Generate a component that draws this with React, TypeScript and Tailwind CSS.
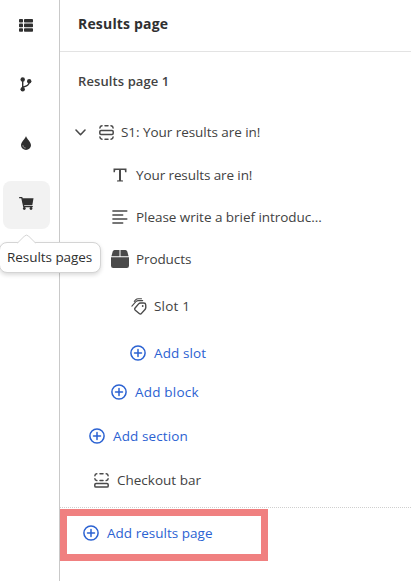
import type { ReactNode } from "react";

const ink = "#4a4a4a";

function ListIcon() {
  return (
    <svg width="14" height="13" viewBox="0 0 14 13" fill="#303030">
      <rect x="0" y="0" width="4" height="3.6" rx=".8" />
      <rect x="5" y="0" width="9" height="3.6" rx=".8" />
      <rect x="0" y="4.6" width="4" height="3.6" rx=".8" />
      <rect x="5" y="4.6" width="9" height="3.6" rx=".8" />
      <rect x="0" y="9.2" width="4" height="3.6" rx=".8" />
      <rect x="5" y="9.2" width="9" height="3.6" rx=".8" />
    </svg>
  );
}

function BranchIcon() {
  return (
    <svg width="12" height="15" viewBox="0 0 12 15" fill="#303030">
      <circle cx="2.7" cy="2.5" r="2.2" />
      <circle cx="2.7" cy="12.3" r="2.2" />
      <circle cx="9.2" cy="4.3" r="2.2" />
      <path d="M2.7 2.5v9.8M9.2 4.5c0 3.7-2.2 4.4-6.2 5.7" fill="none" stroke="#303030" strokeWidth="1.4" />
    </svg>
  );
}

function DropIcon() {
  return (
    <svg width="10" height="14" viewBox="0 0 10 14">
      <path d="M5 0C4.5 2.6 0 6 0 9.2a5 4.8 0 0 0 10 0C10 6 5.500 2.600 5 0z" fill="#303030" />
      <path d="M1.900 9.200c.1 1.800 1 2.600 2.700 2.800" fill="none" stroke="#aaa" strokeWidth=".9" />
    </svg>
  );
}

function CartIcon() {
  return (
    <svg width="15" height="13" viewBox="0 0 15 13" fill="#303030">
      <path d="M.6.7h2.200l2 8.900h8.500" fill="none" stroke="#303030" strokeWidth="1.300" strokeLinecap="round" />
      <path d="M3 1.300h11.500l-1.200 7H4.400z" />
      <circle cx="5.300" cy="11.500" r="1.400" />
      <circle cx="12" cy="11.500" r="1.400" />
    </svg>
  );
}

function Chevron() {
  return (
    <svg width="11" height="7" viewBox="0 0 11 7" fill="none" stroke={ink} strokeWidth="1.6" strokeLinecap="round" strokeLinejoin="round">
      <path d="m1 1 4.500 4.700L10 1" />
    </svg>
  );
}

function SectionIcon() {
  return (
    <svg width="15" height="15" viewBox="0 0 15 15" fill="none" stroke={ink} strokeWidth="1.500" strokeLinecap="round">
      <rect x=".8" y="5.500" width="13.400" height="4" rx="1.200" />
      <path d="M.9 3Q1 1 3 .8M6 .8h3M12 .8q2 .2 2.100 2.200M.9 12q.1 2 2.100 2.200M6 14.200h3M12 14.200q2-.2 2.100-2.200" />
    </svg>
  );
}

function TextIcon() {
  return (
    <svg width="14" height="14" viewBox="0 0 14 14" fill={ink}>
      <path d="M.5.500h13v3.800h-1.400L11.700 2H8v10.200l2 .3v1H4v-1l2-.3V2H2.300l-.4 2.300H.5z" />
    </svg>
  );
}

function LinesIcon() {
  return (
    <svg width="16" height="14" viewBox="0 0 16 14" stroke={ink} strokeWidth="1.500" strokeLinecap="round">
      <path d="M.9 1h13.900M.9 5h9.800M.9 9h13.900M.9 13h9.800" />
    </svg>
  );
}

function BoxIcon() {
  return (
    <svg width="18" height="18" viewBox="0 0 18 18" fill={ink}>
      <path d="M3.500 0h5v6.300H.4L1.700 1.600Q2.200 0 3.500 0zM9.500 0h5q1.300 0 1.800 1.600l1.300 4.700H9.500zM0 7.300h18v8.500q0 2.200-2.200 2.200H2.200Q0 18 0 15.800z" />
    </svg>
  );
}

function TagIcon() {
  return (
    <svg width="16" height="17" viewBox="0 0 16 17" fill="none" stroke={ink} strokeWidth="1.400" strokeLinecap="round" strokeLinejoin="round">
      <path d="M9.600 5h3.200q1.800 0 1.900 1.800l.1 2.800q0 .9-.6 1.600l-3.700 4.200q-1.100 1.100-2.300.1L4.300 12.300q-1.100-1.100-.2-2.300l3.500-4.100q.8-.9 2-.9z" />
      <path d="M.9 8.200 4.900 3.700Q6 2.600 7.400 2.600h4.300" strokeWidth="1.100" />
      <path d="M3.300 3.300 4.600 1.900Q5.700.7 7.200.7h3.300" strokeWidth="1.100" />
      <circle cx="11.700" cy="8" r=".9" fill={ink} stroke="none" />
    </svg>
  );
}

function CheckoutIcon() {
  return (
    <svg width="15" height="15" viewBox="0 0 15 15" fill="none" stroke={ink} strokeWidth="1.500" strokeLinecap="round">
      <rect x=".8" y="10.600" width="13.400" height="3.500" rx="1.200" />
      <path d="M.9 2.700Q1 1 2.800.8M6 .8h3M12.200.8q1.800.2 1.900 1.900M.9 5.800Q1 7.400 2.800 7.600M6 7.600h3M12.200 7.600q1.800-.2 1.900-1.800" />
    </svg>
  );
}

function PlusIcon() {
  return (
    <svg width="16" height="16" viewBox="0 0 16 16" fill="none" stroke="#2b62d2" strokeWidth="1.500" strokeLinecap="round">
      <circle cx="8" cy="8" r="7.100" />
      <path d="M8 4.500v7M4.500 8h7" />
    </svg>
  );
}

function Row({ className, icon, children }: { className: string; icon: ReactNode; children: ReactNode }) {
  return (
    <div className={`flex shrink-0 items-center whitespace-nowrap ${className}`}>
      {icon}
      {children}
    </div>
  );
}

export default function App() {
  return (
    <div className="relative flex h-[581px] w-[411px] overflow-hidden bg-white font-['Open_Sans','Noto_Sans',sans-serif] text-[13.5px] leading-5 text-[#424242]">
      <nav className="flex w-[60px] shrink-0 flex-col border-r border-[#c9c9c9] pl-[3px]">
        <div className="flex h-[50px] w-[46px] items-center justify-center"><ListIcon /></div>
        <div className="mt-[10px] flex h-12 w-[46px] items-center justify-center"><BranchIcon /></div>
        <div className="mt-[11px] flex h-12 w-[46px] items-center justify-center"><DropIcon /></div>
        <div className="mt-[14px] flex h-12 w-[47px] items-center justify-center rounded-lg bg-[#f2f2f2] pb-1"><CartIcon /></div>
      </nav>
      <main className="flex min-w-0 flex-1 flex-col">
        <header className="h-[52px] shrink-0 border-b border-[#e3e3e3] pl-[18px] pt-[14px] text-[14px] font-bold text-[#303030]">
          <span className="tracking-[0.18px]">Results page</span>
        </header>
        <h2 className="h-[59px] shrink-0 pl-[18px] pt-[19px] text-[13px] font-semibold tracking-[0.1px] text-[#424242]">Results page 1</h2>
        <Row className="h-[42px] pl-[15px]" icon={<><Chevron /><span className="w-[13px]" /><SectionIcon /></>}><span className="ml-[7px] tracking-[-0.05px]">S1: Your results are in!</span></Row>
        <Row className="h-[44px] pl-[53px]" icon={<TextIcon />}><span className="ml-[9px] tracking-[-0.1px]">Your results are in!</span></Row>
        <Row className="h-[40px] pl-[52px]" icon={<LinesIcon />}><span className="ml-[8px] tracking-[-0.04px]">Please write a brief introduc...</span></Row>
        <Row className="h-[44px] pl-[51px]" icon={<BoxIcon />}><span className="ml-[7px] tracking-[-0.1px]">Products</span></Row>
        <Row className="h-[50px] pl-[71px]" icon={<TagIcon />}><span className="ml-[7px] tracking-[0.2px]">Slot 1</span></Row>
        <Row className="h-[44px] pl-[70px] text-[#2b62d2]" icon={<PlusIcon />}><span className="ml-[8px] tracking-[0.1px]">Add slot</span></Row>
        <Row className="h-[34px] pl-[51px] text-[#2b62d2]" icon={<PlusIcon />}><span className="ml-[8px] tracking-[0.2px]">Add block</span></Row>
        <Row className="h-[54px] pl-[29px] text-[#2b62d2]" icon={<PlusIcon />}><span className="ml-[8px] tracking-[0.1px]">Add section</span></Row>
        <Row className="h-[34px] pl-[34px]" icon={<CheckoutIcon />}><span className="ml-[8px]">Checkout bar</span></Row>
        <div className="mt-[10px] h-px shrink-0 border-t border-dotted border-[#cfcfcf]" />
        <div className="mt-[1px] h-[52px] w-[208px] shrink-0 border-[7px] border-[#f08080]">
          <Row className="h-[34px] pl-[16px] text-[#2b62d2]" icon={<PlusIcon />}><span className="ml-[8px] tracking-[0.02px]">Add results page</span></Row>
        </div>
      </main>
      <div className="absolute -left-px top-[242px] flex h-[31px] w-[102px] items-center rounded-lg border border-[#d4d4d4] bg-white pb-[2px] pl-[7px] shadow-[0_2px_4px_rgba(0,0,0,0.15)]">
        <svg className="absolute left-[17px] -top-[9px]" width="19" height="10" viewBox="0 0 19 10">
          <path d="M0 9.500 7.500 2Q9.500.2 11.500 2L19 9.500" fill="white" stroke="#d4d4d4" />
          <path d="M1 9.500h17" stroke="white" />
        </svg>
        <span className="whitespace-nowrap tracking-[-0.05px] text-[#303030]">Results pages</span>
      </div>
    </div>
  );
}
